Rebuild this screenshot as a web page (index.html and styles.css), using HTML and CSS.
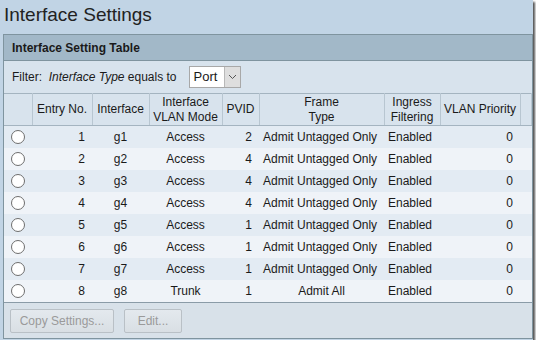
FILE: index.html
```html
<!DOCTYPE html>
<html lang="en">
<head>
    <meta charset="UTF-8">
    <title>Interface Settings</title>
    <link rel="stylesheet" href="styles.css">
</head>
<body>
    <div class="shot">
        <h1 class="page-title">Interface Settings</h1>

        <div class="panel">
            <div class="panel-head">Interface Setting Table</div>

            <div class="filter-row">
                <span>Filter:&nbsp; <i>Interface Type</i> equals to</span>
                <div class="fake-select">
                    <span class="sel-value">Port</span>
                    <span class="sel-arrow">
                        <svg width="9" height="6" viewBox="0 0 9 6"><path d="M1 1 L4.5 4.5 L8 1" fill="none" stroke="#555" stroke-width="1"/></svg>
                    </span>
                </div>
            </div>

            <table class="if-table">
                <colgroup>
                    <col style="width:28px">
                    <col style="width:60px">
                    <col style="width:57px">
                    <col style="width:73px">
                    <col style="width:37px">
                    <col style="width:125px">
                    <col style="width:56px">
                    <col style="width:80px">
                    <col>
                </colgroup>
                <thead>
                    <tr>
                        <th></th>
                        <th>Entry No.</th>
                        <th>Interface</th>
                        <th>Interface<br>VLAN Mode</th>
                        <th>PVID</th>
                        <th>Frame<br>Type</th>
                        <th>Ingress<br>Filtering</th>
                        <th>VLAN Priority</th>
                        <th></th>
                    </tr>
                </thead>
                <tbody>
                    <tr><td class="sel"><span class="radio"></span></td><td class="num">1</td><td class="mid">g1</td><td class="mid">Access</td><td class="num">2</td><td>Admit Untagged Only</td><td>Enabled</td><td class="num">0</td><td></td></tr>
                    <tr><td class="sel"><span class="radio"></span></td><td class="num">2</td><td class="mid">g2</td><td class="mid">Access</td><td class="num">4</td><td>Admit Untagged Only</td><td>Enabled</td><td class="num">0</td><td></td></tr>
                    <tr><td class="sel"><span class="radio"></span></td><td class="num">3</td><td class="mid">g3</td><td class="mid">Access</td><td class="num">4</td><td>Admit Untagged Only</td><td>Enabled</td><td class="num">0</td><td></td></tr>
                    <tr><td class="sel"><span class="radio"></span></td><td class="num">4</td><td class="mid">g4</td><td class="mid">Access</td><td class="num">4</td><td>Admit Untagged Only</td><td>Enabled</td><td class="num">0</td><td></td></tr>
                    <tr><td class="sel"><span class="radio"></span></td><td class="num">5</td><td class="mid">g5</td><td class="mid">Access</td><td class="num">1</td><td>Admit Untagged Only</td><td>Enabled</td><td class="num">0</td><td></td></tr>
                    <tr><td class="sel"><span class="radio"></span></td><td class="num">6</td><td class="mid">g6</td><td class="mid">Access</td><td class="num">1</td><td>Admit Untagged Only</td><td>Enabled</td><td class="num">0</td><td></td></tr>
                    <tr><td class="sel"><span class="radio"></span></td><td class="num">7</td><td class="mid">g7</td><td class="mid">Access</td><td class="num">1</td><td>Admit Untagged Only</td><td>Enabled</td><td class="num">0</td><td></td></tr>
                    <tr><td class="sel"><span class="radio"></span></td><td class="num">8</td><td class="mid">g8</td><td class="mid">Trunk</td><td class="num">1</td><td class="mid">Admit All</td><td>Enabled</td><td class="num">0</td><td></td></tr>
                </tbody>
            </table>

            <div class="button-bar">
                <button class="dim-button wide" disabled>Copy Settings...</button>
                <button class="dim-button" disabled>Edit...</button>
            </div>
        </div>
    </div>
</body>
</html>
```

FILE: styles.css
```css
body {
    margin: 0;
    background: #ffffff;
    font-family: "Liberation Sans", Arial, sans-serif;
    color: #1a1a1a;
}

/* whole screenshot, with its drop shadow */
.shot {
    width: 533px;
    height: 340px;
    background: #c1d4e5;
    box-shadow: 2px 2px 2px #555;
    padding: 0 0 0 3px;
    box-sizing: border-box;
    overflow: hidden;
}

.page-title {
    margin: 0;
    padding: 5px 0 0 1px;
    height: 34px;
    box-sizing: border-box;
    font-size: 19px;
    font-weight: normal;
    color: #222;
    line-height: 20px;
}

/* Table panel */
.panel {
    width: 530px;
    height: 305px;
    box-sizing: border-box;
    border: 1px solid #7f949f;
    background: #d8e1e9;
}

.panel-head {
    height: 25px;
    background: #a2b8c8;
    border-bottom: 1px solid #7f949f;
    padding-left: 8px;
    font-size: 12px;
    font-weight: bold;
    line-height: 26px;
    color: #1a1a1a;
}

.filter-row {
    height: 32px;
    background: #d8e3ed;
    display: flex;
    align-items: center;
    padding-left: 8px;
    font-size: 12px;
}

.fake-select {
    margin-left: 12px;
    display: flex;
    height: 20px;
    border: 1px solid #a8a8a8;
    background: #fff;
}

.sel-value {
    width: 30px;
    padding-left: 4px;
    font-size: 13px;
    line-height: 20px;
}

.sel-arrow {
    width: 15px;
    background: #dedede;
    border-left: 1px solid #b8b8b8;
    display: flex;
    align-items: center;
    justify-content: center;
}

/* Data table */
.if-table {
    width: 528px;
    border-collapse: collapse;
    table-layout: fixed;
    font-size: 12px;
    border-top: 1px solid #a4b4c0;
    border-bottom: 1px solid #8a9ba7;
}

.if-table th {
    height: 31px;
    padding: 0 3px;
    background: #d8e3ed;
    font-weight: normal;
    line-height: 15px;
    text-align: center;
    border-left: 1px solid #f4f7fa;
    border-right: 1px solid #b8c6d1;
    border-bottom: 1px solid #a4b4c0;
}

.if-table th:first-child {
    border-left: none;
}

.if-table td {
    height: 22px;
    padding: 0 4px;
    white-space: nowrap;
    overflow: hidden;
}

.if-table tbody tr:nth-child(odd) {
    background: #e3ebf3;
}

.if-table tbody tr:nth-child(even) {
    background: #eff3f8;
}

.if-table td.num {
    text-align: right;
    padding-right: 7px;
}

.if-table td.mid {
    text-align: center;
}

.if-table td.sel {
    padding: 0 0 0 7px;
}

.radio {
    display: block;
    width: 12px;
    height: 12px;
    border: 1px solid #6e6e6e;
    border-radius: 50%;
    background: #fff;
}

/* Buttons */
.button-bar {
    display: flex;
    gap: 10px;
    padding: 6px 0 0 6px;
}

.dim-button {
    width: 58px;
    height: 24px;
    border: 1px solid #b9c0c6;
    border-radius: 2px;
    background: linear-gradient(#e4e9ee, #d9dfe4);
    color: #9a9a9a;
    font-family: inherit;
    font-size: 12px;
    padding: 0;
}

.dim-button.wide {
    width: 104px;
}
```
